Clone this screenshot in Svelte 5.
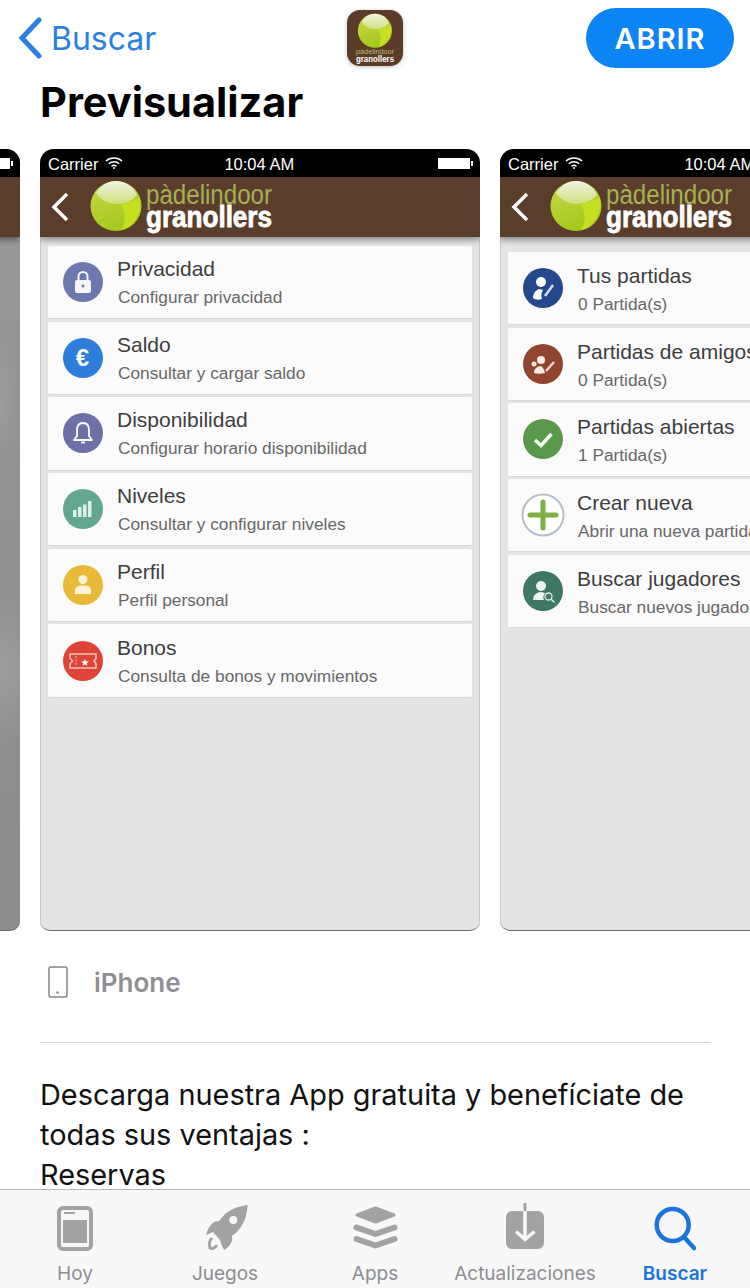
<script>
  const menu = [
    { icon: "lock", color: "#6c78ae", title: "Privacidad", sub: "Configurar privacidad" },
    { icon: "euro", color: "#2f7ddb", title: "Saldo", sub: "Consultar y cargar saldo" },
    { icon: "bell", color: "#6c6fa8", title: "Disponibilidad", sub: "Configurar horario disponibilidad" },
    { icon: "bars", color: "#63a692", title: "Niveles", sub: "Consultar y configurar niveles" },
    { icon: "user", color: "#e9b93a", title: "Perfil", sub: "Perfil personal" },
    { icon: "ticket", color: "#de4438", title: "Bonos", sub: "Consulta de bonos y movimientos" }
  ];
  const games = [
    { icon: "mine", color: "#24478e", title: "Tus partidas", sub: "0 Partida(s)" },
    { icon: "friends", color: "#91442f", title: "Partidas de amigos", sub: "0 Partida(s)" },
    { icon: "check", color: "#5a984b", title: "Partidas abiertas", sub: "1 Partida(s)" },
    { icon: "plus", color: "#ffffff", title: "Crear nueva", sub: "Abrir una nueva partida" },
    { icon: "find", color: "#3f7766", title: "Buscar jugadores", sub: "Buscar nuevos jugadores" }
  ];
  const tabs = ["Hoy", "Juegos", "Apps", "Actualizaciones", "Buscar"];
</script>

{#snippet ball(id)}
  <defs>
    <linearGradient id={id} x1="0" y1="0" x2="0.4" y2="1">
      <stop offset="0" stop-color="#c6d94a" />
      <stop offset="1" stop-color="#a6c81e" />
    </linearGradient>
    <linearGradient id={id + "-top"} x1="0" y1="0" x2="0" y2="1">
      <stop offset="0" stop-color="#f2f3e4" />
      <stop offset="1" stop-color="#cfe07a" />
    </linearGradient>
  </defs>
  <ellipse cx="26" cy="26" rx="25.5" ry="25" fill="url(#{id})" />
  <path d="M31 25 L50 18 C52 34 44 47 31 50 C36 42 36 33 31 25Z" fill="#c5e021" />
  <path d="M6 13 C11 5 18 1 26 1 C35 1 43 6 47 15 C42 21 35 24 26 24 C18 24 11 20 6 13Z" fill="url(#{id}-top)" />
{/snippet}

{#snippet rowIcon(name, color)}
  <svg class="row-icon" viewBox="0 0 44 44">
    {#if name === "plus"}
      <circle cx="22" cy="22" r="20.5" fill="#fff" stroke="#b8bec8" stroke-width="2" />
      <path d="M22 9V35M9 22H35" stroke="#7fb045" stroke-width="5" stroke-linecap="round" />
    {:else}
      <circle cx="22" cy="22" r="20" fill={color} />
    {/if}
    {#if name === "lock"}
      <rect x="14" y="20" width="16" height="13" rx="2" fill="#f6f6fa" />
      <path d="M17.500 20V16.500a4.500 4.500 0 019 0V20" fill="none" stroke="#f6f6fa" stroke-width="2" />
      <circle cx="22" cy="26" r="1.500" fill={color} />
    {:else if name === "euro"}
      <text x="21.500" y="30" class="euro">€</text>
    {:else if name === "bell"}
      <path d="M22 12C18 12 16 15 16 19V25L13 29H31L28 25V19C28 15 26 12 22 12Z" fill="none" stroke="#fff" stroke-width="1.800" stroke-linejoin="round" />
      <path d="M20 31.500H24" stroke="#fff" stroke-width="1.800" />
    {:else if name === "bars"}
      <rect x="12" y="23" width="3.500" height="7" fill="#dcefe8" />
      <rect x="17" y="20" width="3.500" height="10" fill="#dcefe8" />
      <rect x="22" y="17.500" width="3.500" height="12.500" fill="#dcefe8" />
      <rect x="27" y="14" width="3.500" height="16" fill="#dcefe8" />
    {:else if name === "user"}
      <circle cx="22" cy="16.500" r="4.500" fill="#fdf3d6" />
      <path d="M14 31V27C14 24 17 23 19.500 22.500H24.500C27 23 30 24 30 27V31Z" fill="#fdf3d6" />
    {:else if name === "ticket"}
      <path d="M9 15H35V19.500L33 22L35 24.500V29H9V25L11.500 22L9 19Z" fill="none" stroke="#f5c3bb" stroke-width="1.500" />
      <path d="M15 17V27" stroke="#f5c3bb" stroke-width="1" stroke-dasharray="2 1.500" />
      <text x="24" y="27" class="star">★</text>
    {:else if name === "check"}
      <path d="M14 23L20 28.500L30.500 17" fill="none" stroke="#f2f7ef" stroke-width="3.500" />
    {:else if name === "mine"}
      <circle cx="20" cy="16" r="5" fill="#fff" />
      <path d="M12 32C12 27 15 24 18 23L22 24C20 27 20 30 21 33C18 34 14 34 12 32Z" fill="#fff" />
      <path d="M24 30L32 19" stroke="#d7deec" stroke-width="2.500" />
    {:else if name === "friends"}
      <circle cx="20" cy="18" r="4" fill="#f7ece8" />
      <path d="M13 31C13 27 16 24 20 24C22 25 23 28 24 31C20 32 16 32 13 31Z" fill="#f7ece8" />
      <circle cx="13" cy="22" r="2.500" fill="#f7ece8" />
      <path d="M25 29L33 20" stroke="#ecd6cf" stroke-width="2.500" />
    {:else if name === "find"}
      <circle cx="20" cy="17" r="5" fill="#eef5f2" />
      <path d="M12 31C12 26 16 23 20 23L24 24C22 27 22 29 23 31Z" fill="#eef5f2" />
      <circle cx="27.500" cy="27.500" r="3.500" fill={color} stroke="#dbe9e4" stroke-width="1.300" />
      <path d="M30 30L33.500 33.500" stroke="#dbe9e4" stroke-width="1.500" />
    {/if}
  </svg>
{/snippet}

{#snippet phone(items, cls)}
  <div class="shot {cls}">
    <div class="status">
      <span class="carrier">Carrier</span>
      <svg class="wifi" viewBox="0 0 18 13">
        <path d="M1 5C5.500 1 12.500 1 17 5M3.800 7.800C6.800 5.200 11.200 5.200 14.200 7.800M6.500 10.300C8 9.100 10 9.100 11.500 10.300" fill="none" stroke="#fff" stroke-width="1.500" />
        <circle cx="9" cy="12" r="1" fill="#fff" />
      </svg>
      <span class="clock">10:04 AM</span>
      <span class="battery"></span>
    </div>
    <div class="bar">
      <svg class="chevron" viewBox="0 0 20 30">
        <path d="M17 2L4 15L17 28" fill="none" stroke="#fff" stroke-width="3.500" />
      </svg>
      <svg class="logo" viewBox="0 0 184 54">
        {@render ball("ball-" + cls)}
        <text x="56" y="24" class="logo-top" textLength="126" lengthAdjust="spacingAndGlyphs">pàdelindoor</text>
        <text x="56" y="47" class="logo-bottom" textLength="126" lengthAdjust="spacingAndGlyphs">granollers</text>
      </svg>
    </div>
    <div class="list">
      {#each items as item}
        <div class="row">
          {@render rowIcon(item.icon, item.color)}
          <div class="row-text">
            <div class="row-title">{item.title}</div>
            <div class="row-sub">{item.sub}</div>
          </div>
        </div>
      {/each}
    </div>
  </div>
{/snippet}

<div class="page">
  <div class="content">
    <nav class="top">
      <div class="back">
        <svg class="back-arrow" viewBox="0 0 26 42">
          <path d="M22 3L5 21L22 39" fill="none" stroke="#2c7fe3" stroke-width="5" stroke-linecap="round" />
        </svg>
        <span>Buscar</span>
      </div>
      <div class="app-icon">
        <svg viewBox="0 0 56 56">
          <g transform="translate(10.500 3) scale(0.67 0.68)">
            {@render ball("ball-app")}
          </g>
          <text x="28" y="43.500" class="icon-top" textLength="38" lengthAdjust="spacingAndGlyphs">pàdelindoor</text>
          <text x="28" y="52" class="icon-bottom" textLength="38" lengthAdjust="spacingAndGlyphs">granollers</text>
        </svg>
      </div>
      <div class="open-wrap"><span class="open">ABRIR</span></div>
    </nav>

    <h1>Previsualizar</h1>

    <div class="carousel">
      <div class="shot dim">
        <div class="status"><span class="battery"></span></div>
        <div class="bar"></div>
      </div>
      {@render phone(menu, "first")}
      {@render phone(games, "second")}
    </div>

    <div class="device">
      <svg class="device-icon" viewBox="0 0 20 32">
        <rect x="1" y="1" width="18" height="30" rx="2" fill="none" stroke="#85858a" stroke-width="1.500" />
        <circle cx="9.500" cy="26.500" r="1.200" fill="#85858a" />
      </svg>
      <span>iPhone</span>
    </div>

    <div class="divider"></div>

    <p class="about">Descarga nuestra App gratuita y benefíciate de<br />todas sus ventajas :<br />Reservas</p>
  </div>

  <footer class="tabs">
    {#each tabs as tab, i}
      <div class="tab" class:active={i === 4}>
        <svg class="tab-icon" viewBox="0 0 60 50">
          {#if i === 0}
            <rect x="14" y="5" width="32" height="41" rx="4" fill="none" stroke="#a3a3a3" stroke-width="4" />
            <rect x="18" y="17" width="24" height="23" fill="#a3a3a3" />
            <rect x="19" y="9" width="11" height="2" fill="#a3a3a3" />
          {:else if i === 1}
            <path d="M52.700 2C44 3 36 6 30 11L24 18C18 18 14 22 11 32L18 29L25 37C26 40 27 44 29.300 47C35 43 38 39 37 33C46 27 52 16 52.700 2Z" fill="#a3a3a3" />
            <circle cx="38.300" cy="17" r="4" fill="#f8f8f8" />
            <path d="M17 35C14 38 14 42 15 45C17 46 20 45 22 42" fill="none" stroke="#a3a3a3" stroke-width="3" />
          {:else if i === 2}
            <path d="M30.500 5L49 12L30.500 19L12 12Z" fill="#a3a3a3" stroke="#a3a3a3" stroke-width="3" stroke-linejoin="round" />
            <path d="M11.500 24.500L30.500 31L49.500 24.500M11.500 36L30.500 42.500L49.500 36" fill="none" stroke="#a3a3a3" stroke-width="6" stroke-linecap="round" stroke-linejoin="round" />
          {:else if i === 3}
            <rect x="11" y="8" width="38" height="38" rx="6" fill="#a3a3a3" />
            <rect x="28.500" y="0" width="3" height="8" fill="#a3a3a3" />
            <path d="M30 8V35M21 28.500L30 36.500L39.500 28.500" fill="none" stroke="#f8f8f8" stroke-width="3.500" />
          {:else}
            <circle cx="27.700" cy="22" r="16" fill="none" stroke="#1b74dc" stroke-width="4.500" />
            <path d="M39 34L49 45" stroke="#1b74dc" stroke-width="4.500" stroke-linecap="round" />
          {/if}
        </svg>
        <span>{tab}</span>
      </div>
    {/each}
  </footer>
</div>

<style>
  :global(body) {
    margin: 0;
    background: #fff;
  }
  .page {
    width: 750px;
    height: 1288px;
    display: flex;
    flex-direction: column;
    overflow: hidden;
    font-family: Inter, "Liberation Sans", sans-serif;
  }
  .content {
    flex: 1;
    min-height: 0;
    overflow: hidden;
  }
  .top {
    height: 76px;
    display: grid;
    grid-template-columns: 1fr auto 1fr;
    align-items: start;
  }
  .back {
    display: flex;
    align-items: center;
    gap: 8px;
    padding: 17px 0 0 17px;
    color: #2c7fe3;
    font-size: 32px;
    height: 42px;
  }
  .back-arrow {
    width: 26px;
    height: 42px;
  }
  .app-icon {
    width: 56px;
    height: 56px;
    margin-top: 10px;
    border-radius: 13px;
    background: #5a3c28;
    box-shadow: 0 1px 4px rgba(0, 0, 0, 0.25);
    overflow: hidden;
  }
  .app-icon svg {
    display: block;
    width: 56px;
    height: 56px;
  }
  .icon-top {
    font: 8px "Liberation Sans", sans-serif;
    fill: #b5bb70;
    text-anchor: middle;
  }
  .icon-bottom {
    font: bold 9px "Liberation Sans", sans-serif;
    fill: #fff;
    text-anchor: middle;
  }
  .open-wrap {
    display: flex;
    justify-content: flex-end;
    padding: 8px 16px 0 0;
  }
  .open {
    width: 148px;
    height: 60px;
    border-radius: 30px;
    background: #0d84f6;
    color: #fff;
    font-size: 29px;
    font-weight: 600;
    letter-spacing: 1px;
    display: flex;
    align-items: center;
    justify-content: center;
  }
  h1 {
    margin: 0 0 21px 40px;
    height: 52px;
    line-height: 52px;
    font-size: 41.500px;
    font-weight: 700;
    color: #000;
  }
  .carousel {
    display: flex;
    gap: 20px;
    margin-left: -420px;
    width: 1400px;
  }
  .shot {
    flex: none;
    width: 440px;
    height: 782px;
    box-sizing: border-box;
    border-radius: 14px 14px 10px 10px;
    border-bottom: 1.500px solid #6b6b6b;
    overflow: hidden;
    display: flex;
    flex-direction: column;
    background: #e4e4e4;
    font-family: "Liberation Sans", Arial, sans-serif;
  }
  .shot.dim {
    background:
      radial-gradient(ellipse 40px 70px at 400px 250px, #a2a2a2, transparent),
      radial-gradient(ellipse 50px 80px at 420px 520px, #9d9d9d, transparent),
      linear-gradient(180deg, #9a9a9a, #8f9090 60%, #8c8c8c);
  }
  .status {
    height: 28px;
    flex: none;
    box-sizing: border-box;
    padding: 3px 10px 0 8px;
    background: #000;
    color: #fff;
    font-size: 16.500px;
    display: flex;
    align-items: center;
  }
  .wifi {
    width: 18px;
    height: 13px;
    margin: -4px 0 0 7px;
  }
  .clock {
    margin-left: 101px;
  }
  .battery {
    margin: -3px 0 0 auto;
    width: 30px;
    height: 9px;
    background: #fff;
    border: 1px solid #fff;
    position: relative;
  }
  .battery::after {
    content: "";
    position: absolute;
    right: -4px;
    top: 2px;
    width: 2px;
    height: 5px;
    background: #fff;
  }
  .bar {
    height: 60px;
    flex: none;
    background: #5a3d2b;
    box-shadow: 0 3px 6px rgba(0, 0, 0, 0.4);
    display: flex;
    align-items: center;
    gap: 20px;
    padding-left: 10px;
    position: relative;
  }
  .chevron {
    width: 20px;
    height: 30px;
  }
  .logo {
    width: 184px;
    height: 54px;
  }
  .logo-top {
    font: 27px "Liberation Sans", sans-serif;
    fill: #a5b152;
  }
  .logo-bottom {
    font: bold 29px "Liberation Sans", sans-serif;
    fill: #fff;
    stroke: #fff;
    stroke-width: 0.800px;
  }
  .list {
    flex: 1;
    display: flex;
    flex-direction: column;
    gap: 2.500px;
    padding: 9px 8px 0;
    box-shadow: inset 1px 0 #c9c9c9, inset -1px 0 #c9c9c9;
  }
  .second .list {
    padding-top: 15px;
  }
  .row {
    height: 73.200px;
    flex: none;
    box-sizing: border-box;
    background: #fbfbfb;
    border-bottom: 1px solid #d8d8d8;
    border-radius: 2px;
    display: flex;
    align-items: center;
    padding-left: 13px;
    gap: 12px;
  }
  .row-icon {
    width: 44px;
    height: 44px;
    flex: none;
  }
  .row-text {
    white-space: nowrap;
    padding-top: 1px;
  }
  .second .row-text {
    padding-top: 3px;
  }
  .row-title {
    font-size: 21px;
    line-height: 24px;
    color: #3e3e3e;
    margin-bottom: 5px;
  }
  .row-sub {
    font-size: 17.300px;
    line-height: 22px;
    color: #686868;
    margin-left: 1px;
  }
  .euro {
    font: bold 24px "Liberation Sans", sans-serif;
    fill: #fff;
    text-anchor: middle;
  }
  .star {
    font: 10px "DejaVu Sans", sans-serif;
    fill: #fff;
    text-anchor: middle;
  }
  .device {
    display: flex;
    align-items: center;
    gap: 26px;
    padding: 35px 0 0 48px;
    height: 32px;
    color: #8e8e93;
    font-size: 26px;
    font-weight: 600;
  }
  .device-icon {
    width: 20px;
    height: 32px;
  }
  .divider {
    height: 1px;
    margin: 44px 39px 0 40px;
    background: #d2d2d2;
  }
  .about {
    margin: 32px 0 0 40px;
    font-size: 28.900px;
    line-height: 40px;
    color: #111;
    white-space: nowrap;
  }
  .tabs {
    height: 99px;
    flex: none;
    box-sizing: border-box;
    border-top: 1px solid #b7b7b7;
    background: #f8f8f8;
    display: flex;
  }
  .tab {
    flex: 1;
    display: flex;
    flex-direction: column;
    align-items: center;
    padding-top: 13px;
    color: #8e8e93;
    font-size: 19px;
    white-space: nowrap;
  }
  .tab.active {
    color: #1b74dc;
    font-weight: 600;
  }
  .tab-icon {
    width: 60px;
    height: 50px;
    flex: none;
  }
  .tab span {
    margin-top: 7px;
    line-height: 28px;
  }
</style>
